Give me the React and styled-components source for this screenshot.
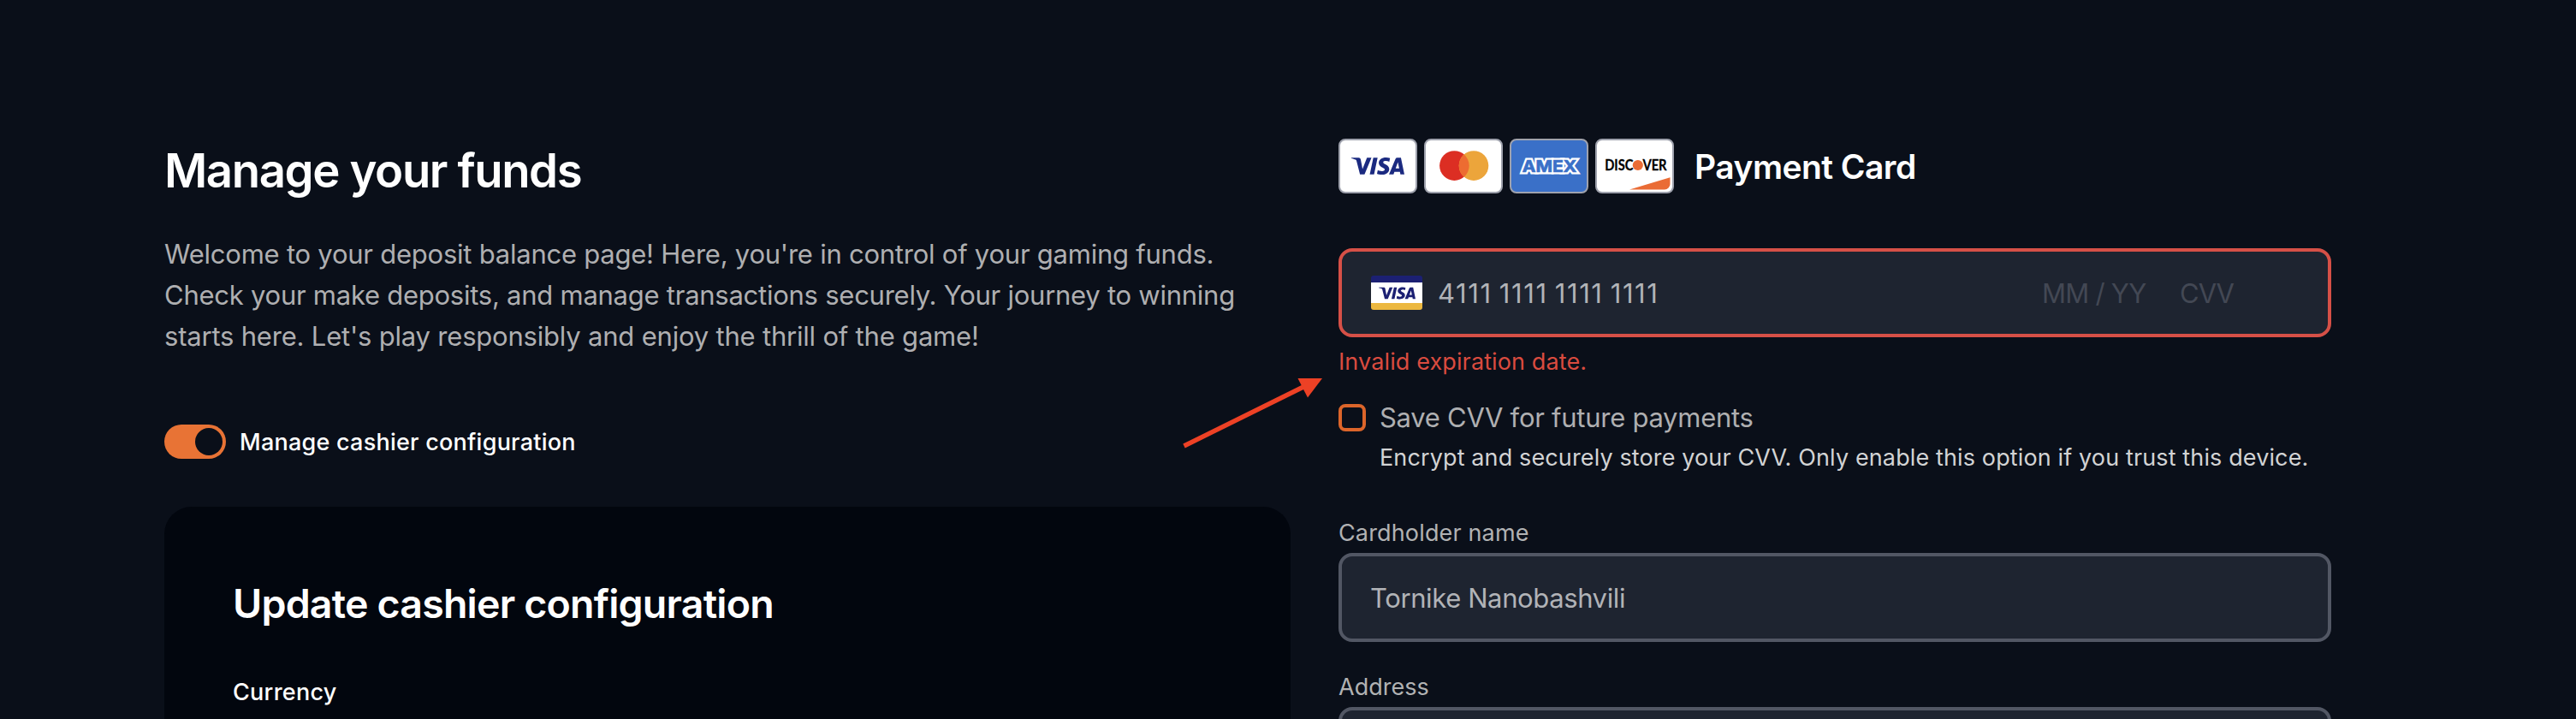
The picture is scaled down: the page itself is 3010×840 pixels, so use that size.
import React from 'react';
import styled, { createGlobalStyle } from 'styled-components';
import { SiVisa } from 'react-icons/si';

const GlobalStyle = createGlobalStyle`
  *, *::before, *::after { box-sizing: border-box; }
  html, body { margin: 0; height: 100%; background: #0a0f19; overflow: hidden; }
  body { font-family: Inter, 'Noto Sans', sans-serif; -webkit-font-smoothing: antialiased; }
  h1, h2, h3, p { margin: 0; }
`;

const Page = styled.main`
  position: relative;
  display: grid;
  grid-template-columns: 1316px 1160px;
  column-gap: 56px;
  align-items: start;
  height: 840px;
  padding: 162px 0 0 192px;
  overflow: hidden;
  background: #0a0f19;
  color: #fff;
`;

const Column = styled.section`
  display: flex;
  flex-direction: column;
`;

const PageTitle = styled.h1`
  margin: 1px 0 38px;
  font-size: 54.5px;
  line-height: 72px;
  font-weight: 600;
  letter-spacing: -1.4px;
`;

const Intro = styled.p`
  color: #afafb1;
  font-size: 31px;
  line-height: 48px;
  white-space: nowrap;
`;

const IntroLine = styled.span`
  display: block;
  letter-spacing: ${(p) => p.$tracking}px;
`;

const SwitchRow = styled.label`
  display: flex;
  align-items: center;
  gap: 16px;
  height: 40px;
  margin: 79px 0 56px;
  font-size: 27px;
  line-height: 39px;
  font-weight: 500;
  letter-spacing: 0.24px;
`;

const SwitchTrack = styled.span`
  display: flex;
  align-items: center;
  justify-content: flex-end;
  width: 72px;
  height: 40px;
  padding: 4px;
  border-radius: 20px;
  background: #e87335;
`;

const SwitchKnob = styled.span`
  width: 32px;
  height: 32px;
  border-radius: 50%;
  background: #0a0f19;
`;

const SwitchText = styled.span`
  padding-top: 1px;
`;

const Panel = styled.div`
  height: 400px;
  padding: 81px 80px 0;
  border-radius: 32px;
  background: #02060e;
`;

const PanelTitle = styled.h2`
  margin-bottom: 52px;
  font-size: 46.5px;
  line-height: 64px;
  font-weight: 600;
  letter-spacing: -0.8px;
`;

const PanelLabel = styled.div`
  font-size: 27px;
  line-height: 40px;
  font-weight: 500;
  letter-spacing: 0.27px;
`;

const MethodHeader = styled.header`
  display: flex;
  align-items: center;
  gap: 8px;
  height: 64px;
  margin-bottom: 64px;
`;

const MethodTitle = styled.h3`
  margin-left: 16px;
  padding-top: 2px;
  font-size: 39px;
  line-height: 56px;
  font-weight: 600;
  letter-spacing: -0.54px;
`;

const Brand = styled.span`
  display: flex;
  align-items: center;
  justify-content: center;
  width: 92px;
  height: 64px;
  border: 2px solid #9fa2ad;
  border-radius: 8px;
  overflow: hidden;
  background: ${(p) => p.$bg || '#fff'};
  color: #1b2a80;

  svg { flex: none; display: block; }
`;

const Field = styled.div`
  display: flex;
  align-items: center;
  height: 104px;
  padding: 0 ${(p) => (p.$invalid ? 34 : 33)}px;
  border: 4px solid ${(p) => (p.$invalid ? '#d65047' : '#525764')};
  border-radius: 16px;
  background: #1e2430;
  color: #b1b3b7;
  font-size: 31px;
  letter-spacing: -0.39px;
  white-space: nowrap;
`;

const VisaBadge = styled.span`
  display: flex;
  align-items: center;
  justify-content: center;
  width: 60px;
  height: 40px;
  margin-right: 18px;
  border-top: 8px solid #1c2073;
  border-bottom: 8px solid #ecb840;
  border-radius: 3px;
  background: #fff;
  color: #1c2073;
  overflow: hidden;

  svg { flex: none; display: block; }
`;

const CardNumber = styled.span`
  flex: 1;
  letter-spacing: 1.6px;
  word-spacing: -2.2px;
`;

const Hint = styled.span`
  width: ${(p) => p.$width}px;
  color: #434854;
  letter-spacing: ${(p) => p.$tracking}px;
`;

const ErrorText = styled.p`
  margin: 9px 0 25px;
  color: #d94b3f;
  font-size: 27px;
  line-height: 40px;
  letter-spacing: 0.12px;
`;

const SaveOption = styled.label`
  display: grid;
  grid-template-columns: 32px 1fr;
  column-gap: 16px;
  row-gap: 7px;
  align-items: center;
  margin-bottom: 48px;
  line-height: 40px;
  white-space: nowrap;
`;

const Checkbox = styled.span`
  width: 32px;
  height: 32px;
  border: 4px solid #dc652a;
  border-radius: 8px;
`;

const OptionTitle = styled.span`
  color: #afafb1;
  font-size: 31px;
  letter-spacing: -0.27px;
`;

const OptionNote = styled.span`
  grid-column: 2;
  color: #d2d3d4;
  font-size: 27px;
  letter-spacing: 0.125px;
`;

const FieldGroup = styled.div`
  margin-bottom: 33px;
`;

const FieldLabel = styled.div`
  margin-bottom: 3px;
  color: #b1b2b3;
  font-size: 27px;
  line-height: 40px;
  letter-spacing: ${(p) => p.$tracking || 0}px;
`;

const Pointer = styled.svg`
  position: absolute;
  left: 1380px;
  top: 436px;
  width: 170px;
  height: 92px;
`;

const Mastercard = () => (
  <svg width="92" height="64" viewBox="0 0 92 64">
    <circle cx="35.4" cy="31.6" r="17.3" fill="#dc2e23" />
    <circle cx="58" cy="31.6" r="17.3" fill="#eca53b" />
    <path d="M46.7 18.5a17.3 17.3 0 0 1 0 26.2a17.3 17.3 0 0 1 0-26.2z" fill="#ed6c31" />
  </svg>
);

const Amex = () => (
  <svg width="92" height="64" viewBox="0 0 92 64" fontFamily="Inter, sans-serif" fontSize="19" fontWeight="700">
    <text x="14.8" y="39.1" textLength="63.4" lengthAdjust="spacingAndGlyphs" fill="#fff" stroke="#fff" strokeWidth="5">AMEX</text>
    <text x="14.8" y="39.1" textLength="63.4" lengthAdjust="spacingAndGlyphs" fill="#3a70c8" stroke="#3a70c8" strokeWidth="0.7">AMEX</text>
  </svg>
);

const Discover = () => (
  <svg width="92" height="64" viewBox="0 0 92 64" fontFamily="Lato, sans-serif" fontSize="16.6" fontWeight="700">
    <text x="11.2" y="37" textLength="33.2" lengthAdjust="spacingAndGlyphs" fill="#000" stroke="#000" strokeWidth="0.3">DISC</text>
    <circle cx="49.8" cy="31" r="6.1" fill="#ea6c35" />
    <text x="55.4" y="37" textLength="28.2" lengthAdjust="spacingAndGlyphs" fill="#000" stroke="#000" strokeWidth="0.3">VER</text>
    <path d="M40 59.5 87.5 45.2V53a6.5 6.5 0 0 1-6.5 6.5z" fill="#ea6c35" />
  </svg>
);

export default function App() {
  return (
    <>
      <GlobalStyle />
      <Page>
        <Column>
          <PageTitle>Manage your funds</PageTitle>
          <Intro>
            <IntroLine $tracking={-0.237}>Welcome to your deposit balance page! Here, you're in control of your gaming funds.</IntroLine>
            <IntroLine $tracking={-0.252}>Check your make deposits, and manage transactions securely. Your journey to winning</IntroLine>
            <IntroLine $tracking={-0.2}>starts here. Let's play responsibly and enjoy the thrill of the game!</IntroLine>
          </Intro>
          <SwitchRow>
            <SwitchTrack><SwitchKnob /></SwitchTrack>
            <SwitchText>Manage cashier configuration</SwitchText>
          </SwitchRow>
          <Panel>
            <PanelTitle>Update cashier configuration</PanelTitle>
            <PanelLabel>Currency</PanelLabel>
          </Panel>
        </Column>

        <Column>
          <MethodHeader>
            <Brand><SiVisa size={62} /></Brand>
            <Brand><Mastercard /></Brand>
            <Brand $bg="#3a70c8"><Amex /></Brand>
            <Brand><Discover /></Brand>
            <MethodTitle>Payment Card</MethodTitle>
          </MethodHeader>

          <Field $invalid>
            <VisaBadge><SiVisa size={43} /></VisaBadge>
            <CardNumber>4111 1111 1111 1111</CardNumber>
            <Hint $width={161} $tracking={-0.75}>MM / YY</Hint>
            <Hint $width={139} $tracking={-1}>CVV</Hint>
          </Field>
          <ErrorText>Invalid expiration date.</ErrorText>

          <SaveOption>
            <Checkbox />
            <OptionTitle>Save CVV for future payments</OptionTitle>
            <OptionNote>Encrypt and securely store your CVV. Only enable this option if you trust this device.</OptionNote>
          </SaveOption>

          <FieldGroup>
            <FieldLabel $tracking={0.15}>Cardholder name</FieldLabel>
            <Field>Tornike Nanobashvili</Field>
          </FieldGroup>
          <FieldGroup>
            <FieldLabel>Address</FieldLabel>
            <Field />
          </FieldGroup>
        </Column>

        <Pointer viewBox="0 0 170 92">
          <path d="M3.5 85 143 16" stroke="#ed4125" strokeWidth="5.4" fill="none" />
          <path d="M165 6 136.5 6 148 28.6z" fill="#ed4125" />
        </Pointer>
      </Page>
    </>
  );
}
